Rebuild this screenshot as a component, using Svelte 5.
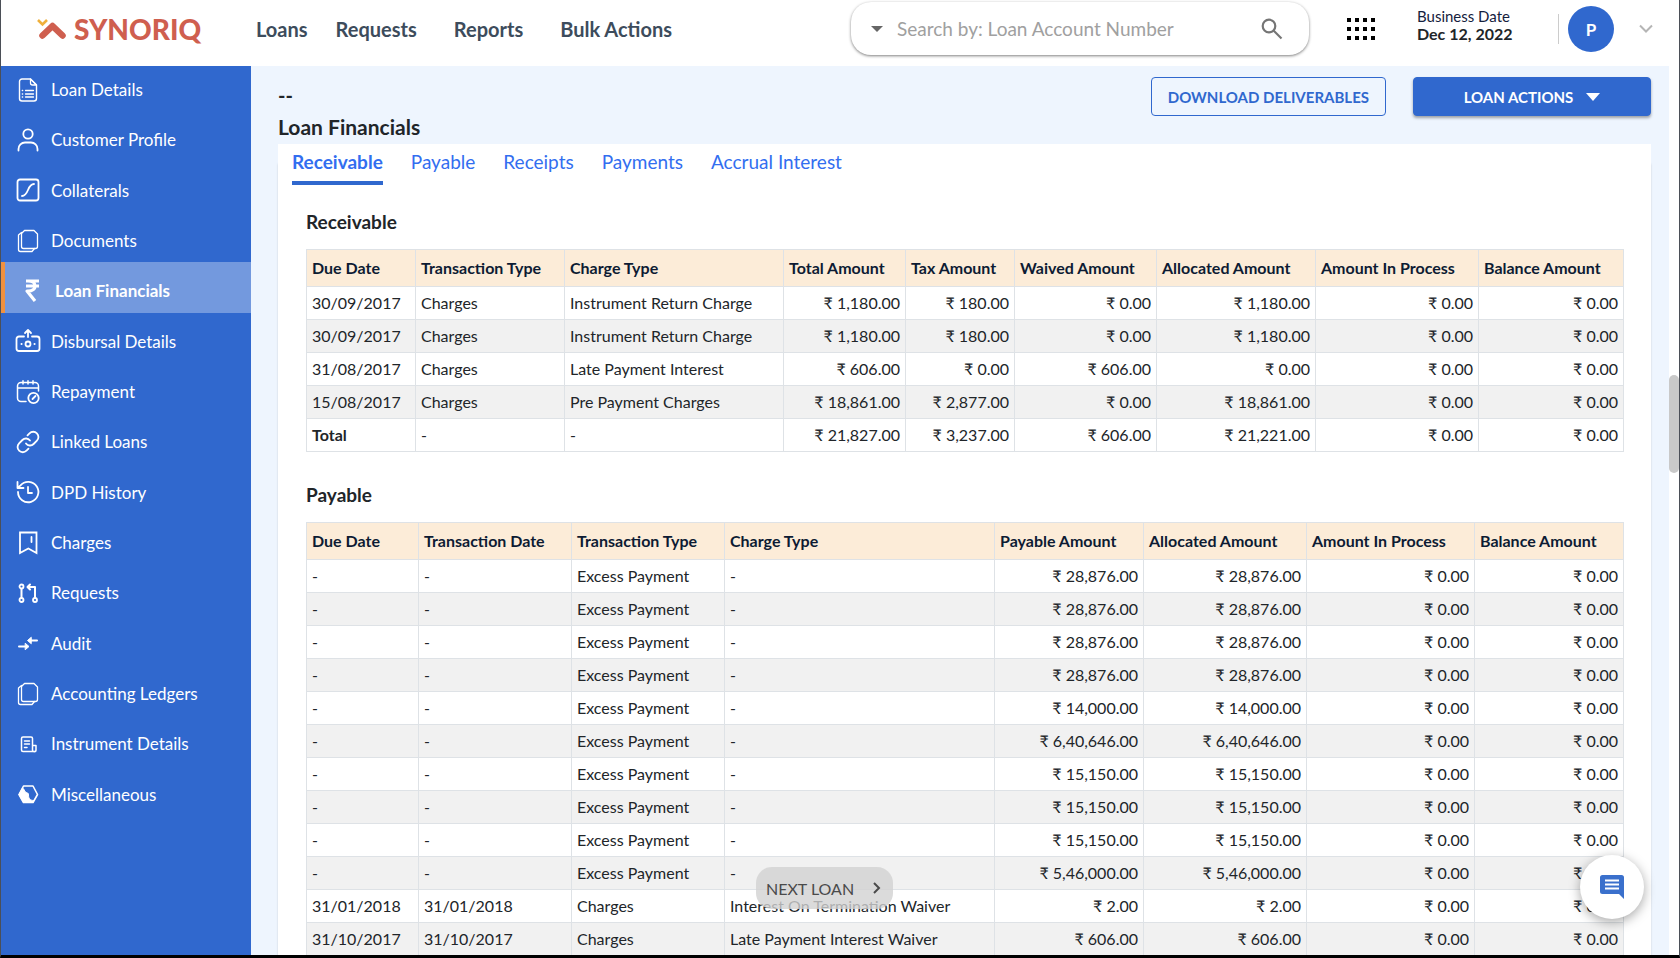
<script lang="ts">
  const topLinks = ['Loans', 'Requests', 'Reports', 'Bulk Actions'];

  const menu = [
    { label: 'Loan Details', icon: 'file' },
    { label: 'Customer Profile', icon: 'user' },
    { label: 'Collaterals', icon: 'curve' },
    { label: 'Documents', icon: 'docs' },
    { label: 'Loan Financials', icon: 'rupee' },
    { label: 'Disbursal Details', icon: 'disburse' },
    { label: 'Repayment', icon: 'calendar' },
    { label: 'Linked Loans', icon: 'link' },
    { label: 'DPD History', icon: 'history' },
    { label: 'Charges', icon: 'bookmark' },
    { label: 'Requests', icon: 'pull' },
    { label: 'Audit', icon: 'arrows' },
    { label: 'Accounting Ledgers', icon: 'docs' },
    { label: 'Instrument Details', icon: 'receipt' },
    { label: 'Miscellaneous', icon: 'hexagon' }
  ];

  const tabs = ['Receivable', 'Payable', 'Receipts', 'Payments', 'Accrual Interest'];

  let activeItem = $state('Loan Financials');
  let activeTab = $state('Receivable');
  let query = $state('');

  const excess = (amount: string) => ['-', '-', 'Excess Payment', '-', amount, amount, '0.00', '0.00'];

  // textCols: number of leading text columns, the rest are amounts
  const tables = [
    {
      title: 'Receivable',
      textCols: 3,
      widths: [109, 149, 219, 122, 109, 142, 159, 163, 145],
      head: ['Due Date', 'Transaction Type', 'Charge Type', 'Total Amount', 'Tax Amount', 'Waived Amount', 'Allocated Amount', 'Amount In Process', 'Balance Amount'],
      rows: [
        ['30/09/2017', 'Charges', 'Instrument Return Charge', '1,180.00', '180.00', '0.00', '1,180.00', '0.00', '0.00'],
        ['30/09/2017', 'Charges', 'Instrument Return Charge', '1,180.00', '180.00', '0.00', '1,180.00', '0.00', '0.00'],
        ['31/08/2017', 'Charges', 'Late Payment Interest', '606.00', '0.00', '606.00', '0.00', '0.00', '0.00'],
        ['15/08/2017', 'Charges', 'Pre Payment Charges', '18,861.00', '2,877.00', '0.00', '18,861.00', '0.00', '0.00'],
        ['Total', '-', '-', '21,827.00', '3,237.00', '606.00', '21,221.00', '0.00', '0.00']
      ]
    },
    {
      title: 'Payable',
      textCols: 4,
      widths: [112, 153, 153, 270, 149, 163, 168, 149],
      head: ['Due Date', 'Transaction Date', 'Transaction Type', 'Charge Type', 'Payable Amount', 'Allocated Amount', 'Amount In Process', 'Balance Amount'],
      rows: [
        excess('28,876.00'),
        excess('28,876.00'),
        excess('28,876.00'),
        excess('28,876.00'),
        excess('14,000.00'),
        excess('6,40,646.00'),
        excess('15,150.00'),
        excess('15,150.00'),
        excess('15,150.00'),
        excess('5,46,000.00'),
        ['31/01/2018', '31/01/2018', 'Charges', 'Interest On Termination Waiver', '2.00', '2.00', '0.00', '0.00'],
        ['31/10/2017', '31/10/2017', 'Charges', 'Late Payment Interest Waiver', '606.00', '606.00', '0.00', '0.00']
      ]
    }
  ];
</script>

{#snippet icon(name: string)}
  <svg class="icon" width="26" height="26" viewBox="0 0 26 26" fill="none" stroke="currentColor" stroke-width="1.8" stroke-linecap="round" stroke-linejoin="round" aria-hidden="true">
    {#if name === 'file'}
      <path d="M15.500 2H7a2.500 2.500 0 0 0-2.500 2.500v17A2.500 2.500 0 0 0 7 24h12a2.500 2.500 0 0 0 2.500-2.500V8z" stroke-width="1.4" />
      <path d="M15.500 2v4a2 2 0 0 0 2 2h4zM10.500 13.500h8M10.500 17h8M10.500 20h8M7.300 13.500h.4M7.300 17h.4M7.300 20h.4" stroke-width="1.3" />
    {:else if name === 'user'}
      <circle cx="13" cy="7" r="4.700" />
      <path d="M3.500 23.500v-1.500a6.500 6.500 0 0 1 6.500-6.500h6a6.500 6.500 0 0 1 6.500 6.500v1.500" />
    {:else if name === 'curve'}
      <rect x="2.500" y="2.500" width="21" height="21" rx="2.500" />
      <path d="M7 19c7 0 5-12 12-12" />
    {:else if name === 'docs'}
      <path d="M9.500 2.500h9.500l3.500 3.500V18.500a2 2 0 0 1-2 2H8.500a2 2 0 0 1-2-2V5.500z" stroke-width="1.300" />
      <path d="M6.500 4.500 3.500 7v14.500a2 2 0 0 0 2 2H17l2.500-3" stroke-width="1.300" />
    {:else if name === 'rupee'}
      <path d="M7 3h13M7 8h13M9 3c9.500 0 9.500 10 0 10H8l8 10" stroke-width="3.200" stroke-linecap="butt" />
    {:else if name === 'disburse'}
      <path d="M9 8.500H4A2.500 2.500 0 0 0 1.500 11v9.500A2.500 2.500 0 0 0 4 23h18a2.500 2.500 0 0 0 2.500-2.500V11A2.500 2.500 0 0 0 22 8.500h-5M13 9V2.500M10 5l3-3 3 3" />
      <circle cx="13" cy="16" r="2.500" />
      <path d="M6.500 16h.1M19.500 16h.1" stroke-width="2" />
    {:else if name === 'calendar'}
      <path d="M11 22.500H6a3.500 3.500 0 0 1-3.500-3.500V7A3.500 3.500 0 0 1 6 3.500h14A3.500 3.500 0 0 1 23.500 7v5M2.500 9h21M8 1.800V5M18 1.800V5M13 1.800V5" stroke-width="1.500" />
      <circle cx="18.500" cy="19" r="5.200" />
      <path d="m17.500 20 3-3" />
    {:else if name === 'link'}
      <path d="M11 14.500a5 5 0 0 0 7.600.5l3.300-3.300a5.200 5.200 0 0 0-7.400-7.400l-2 2" />
      <path d="M15 11.500a5 5 0 0 0-7.600-.5l-3.300 3.300a5.200 5.200 0 0 0 7.400 7.400l2-2" />
    {:else if name === 'history'}
      <path d="M3 13a10.200 10.200 0 1 0 2.500-6.700L2.500 9M2.500 3v6h6M13 8v6h4" />
    {:else if name === 'bookmark'}
      <path d="M5 2.500h16.500v20.500l-8.200-4.500L5 23zM16.500 7v5" stroke-linejoin="miter" />
    {:else if name === 'pull'}
      <circle cx="6.500" cy="6.500" r="2" />
      <circle cx="6.500" cy="20" r="2" />
      <circle cx="20" cy="20" r="2" />
      <path d="M6.500 9v8.500M20 17.500V7h-7M15 4.500 12.500 7l2.500 2.500" stroke-width="2" />
    {:else if name === 'arrows'}
      <path d="M4 16.500h7M22 10.500h-7" stroke-width="2" />
      <path d="m10.500 13.500 3.500 3-3.500 3zM16 7.500l-3.500 3 3.500 3z" fill="currentColor" stroke-width="1" />
    {:else if name === 'receipt'}
      <path d="M17.500 15.500V7.500a1.500 1.500 0 0 0-1.500-1.500H8a1.500 1.500 0 0 0-1.500 1.500V19A1.500 1.500 0 0 0 8 20.500h11.500M17.500 14.500h3.500V19a1.500 1.500 0 0 1-3.500 0zM9.500 10h5M9.500 13h5M9.500 16.500h2.500" stroke-width="1.500" />
    {:else}
      <path d="M8.500 5h9.500l4.500 8.500L18 21.500H8.500L4 13.500z" stroke-width="1.600" />
      <path d="M7.500 7 4 13.500l4.500 8h9.500l1-2c-4 0-5.500-2-5.500-5.500 0-2.500-1.500-2-3-3S9.500 7.500 7.500 7z" fill="currentColor" stroke-width="1" />
    {/if}
  </svg>
{/snippet}

<div class="app">
  <header class="topbar">
    <a class="brand" href="#home">
      <svg width="32" height="22" viewBox="0 0 32 22" fill="none" aria-hidden="true">
        <path d="m2 2 4.500 4.500L11 2" stroke="#efb03c" stroke-width="2.600" />
        <path d="m6.500 17.500 10-9.500 10 9.500" stroke="#cf5f4f" stroke-width="6.500" stroke-linejoin="round" stroke-linecap="round" />
      </svg>
      <span>SYNORIQ</span>
    </a>

    <nav class="top-nav">
      {#each topLinks as link}
        <a href="#{link}">{link}</a>
      {/each}
    </nav>

    <form class="search" role="search">
      <button type="button" class="plain" aria-label="Search field">
        <svg width="12" height="6" viewBox="0 0 12 6" fill="#666"><path d="M0 0h12L6 6z" /></svg>
      </button>
      <input type="text" placeholder="Search by: Loan Account Number" aria-label="Search by: Loan Account Number" bind:value={query} />
      <button type="button" class="plain" aria-label="Search">
        <svg width="22" height="22" viewBox="0 0 22 22" fill="none" stroke="#757575" stroke-width="2.200">
          <circle cx="8" cy="8" r="6.300" />
          <path d="m12.500 12.500 8 8" />
        </svg>
      </button>
    </form>

    <button class="plain apps" aria-label="Apps">
      <svg width="28" height="22" viewBox="0 0 28 22" fill="#000">
        {#each [0, 9, 18] as y}
          {#each [0, 8, 16, 24] as x}
            <rect {x} {y} width="4" height="4" />
          {/each}
        {/each}
      </svg>
    </button>

    <div class="date">
      <span>Business Date</span>
      <strong>Dec 12, 2022</strong>
    </div>

    <div class="account">
      <span class="avatar">P</span>
      <button class="plain" aria-label="Account menu">
        <svg width="14" height="10" viewBox="0 0 14 10" fill="none" stroke="#b5b5b5" stroke-width="2"><path d="m1 1.500 6 6 6-6" /></svg>
      </button>
    </div>
  </header>

  <div class="body">
    <nav class="sidebar">
      <div class="menu">
        {#each menu as item}
          <button class="menu-item" class:active={activeItem === item.label} onclick={() => (activeItem = item.label)}>
            {@render icon(item.icon)}
            <span>{item.label}</span>
          </button>
        {/each}
      </div>
    </nav>

    <main>
      <div class="page-head">
        <div class="titles">
          <span class="loan-id">--</span>
          <h1>Loan Financials</h1>
        </div>
        <button class="btn outline">DOWNLOAD DELIVERABLES</button>
        <button class="btn solid">
          LOAN ACTIONS
          <svg width="14" height="8" viewBox="0 0 14 8" fill="currentColor" aria-hidden="true"><path d="M0 0h14L7 8z" /></svg>
        </button>
      </div>

      <section class="panel">
        <div class="tabs" role="tablist">
          {#each tabs as tab}
            <button role="tab" aria-selected={activeTab === tab} class="tab" class:active={activeTab === tab} onclick={() => (activeTab = tab)}>{tab}</button>
          {/each}
        </div>

        {#each tables as table}
          <h2>{table.title}</h2>
          <table>
            <colgroup>
              {#each table.widths as width}
                <col style="width: {width}px" />
              {/each}
            </colgroup>
            <thead>
              <tr>
                {#each table.head as label}
                  <th scope="col">{label}</th>
                {/each}
              </tr>
            </thead>
            <tbody>
              {#each table.rows as row}
                <tr>
                  {#each row as cell, i}
                    {#if i < table.textCols}
                      <td class:total={cell === 'Total'}>{cell}</td>
                    {:else}
                      <td class="amount">₹ {cell}</td>
                    {/if}
                  {/each}
                </tr>
              {/each}
            </tbody>
          </table>
        {/each}
      </section>
    </main>

    <div class="scrollbar"><div class="thumb"></div></div>
  </div>

  <button class="next-loan">
    NEXT LOAN
    <svg width="8" height="12" viewBox="0 0 8 12" fill="none" stroke="currentColor" stroke-width="2" aria-hidden="true"><path d="m1 1 5 5-5 5" /></svg>
  </button>

  <button class="chat" aria-label="Open chat">
    <svg width="24" height="24" viewBox="0 0 24 24" aria-hidden="true">
      <path d="M2.500 0h19A2.500 2.500 0 0 1 24 2.500V24l-5-5H2.500A2.500 2.500 0 0 1 0 16.500v-14A2.500 2.500 0 0 1 2.500 0z" fill="#3a70cc" />
      <path d="M5 5.500h14M5 9.500h14M5 13.500h14" stroke="#fff" stroke-width="2" />
    </svg>
  </button>
</div>

<style>
  :global(body) {
    margin: 0;
    overflow: hidden;
  }

  .app {
    box-sizing: border-box;
    height: 100vh;
    display: flex;
    flex-direction: column;
    position: relative;
    overflow: hidden;
    background: #fff;
    border: 1px solid #4b4f57;
    border-top: none;
    border-bottom: 3px solid #000;
    font-family: Lato, 'Liberation Sans', sans-serif;
    font-size: 17px;
    color: #212529;
  }

  button,
  input {
    font: inherit;
  }

  button {
    cursor: pointer;
  }

  .plain {
    display: flex;
    padding: 0;
    border: none;
    background: none;
  }

  .topbar {
    height: 66px;
    flex-shrink: 0;
    display: flex;
    align-items: flex-start;
  }

  .brand {
    display: flex;
    align-items: center;
    gap: 6px;
    width: 220px;
    height: 58px;
    padding-left: 35px;
    color: #cf5f4f;
    font-size: 28px;
    font-weight: 900;
    text-decoration: none;
  }

  .top-nav {
    display: flex;
    align-items: center;
    gap: 28px;
    height: 58px;
    color: #3d4c5c;
    font-size: 20px;
    font-weight: 700;
  }

  .top-nav a {
    color: inherit;
    text-decoration: none;
  }

  .top-nav a:nth-child(n + 3) {
    margin-left: 9px;
  }

  .search {
    box-sizing: border-box;
    display: flex;
    align-items: center;
    gap: 14px;
    width: 458px;
    height: 53px;
    margin: 2px 0 0 auto;
    padding: 0 26px 0 20px;
    border-radius: 20px;
    box-shadow: 0 1px 3px rgba(0, 0, 0, 0.5);
  }

  .search input {
    flex: 1;
    min-width: 0;
    padding: 0;
    border: none;
    outline: none;
    background: none;
    font-size: 19px;
  }

  .search input::placeholder {
    color: #a0a0a0;
  }

  .apps {
    margin: 18px 42px 0 38px;
  }

  .date {
    display: flex;
    flex-direction: column;
    width: 141px;
    margin-top: 7px;
    font-size: 15px;
    line-height: 18px;
    color: #14213d;
  }

  .date strong {
    font-size: 16px;
    color: #212529;
  }

  .account {
    display: flex;
    align-items: center;
    gap: 25px;
    height: 46px;
    margin-top: 6px;
    padding-right: 26px;
  }

  .account::before {
    content: '';
    width: 1px;
    height: 30px;
    margin-right: -16px;
    background: #ccc;
  }

  .avatar {
    display: grid;
    place-items: center;
    width: 46px;
    height: 46px;
    border-radius: 50%;
    background: #3068ce;
    color: #fff;
    font-size: 17px;
    font-weight: 700;
  }

  .body {
    flex: 1;
    min-height: 0;
    display: flex;
  }

  .sidebar {
    width: 250px;
    flex-shrink: 0;
    background: #3068ce;
  }

  /* first row tucks under the top bar */
  .menu {
    display: grid;
    grid-auto-rows: 1fr;
    height: 755px;
    margin-top: -5px;
  }

  .menu-item {
    display: flex;
    align-items: center;
    gap: 10px;
    padding: 7px 0 0 14px;
    border: none;
    background: none;
    color: #fff;
    text-align: left;
  }

  .menu-item.active {
    border-left: 4px solid #f0913f;
    background: #7399de;
    font-weight: 700;
  }

  .icon {
    flex-shrink: 0;
  }

  main {
    flex: 1;
    min-width: 0;
    padding: 11px 18px 0 27px;
    background: #eef5fe;
  }

  .page-head {
    display: flex;
    align-items: flex-start;
    gap: 27px;
    height: 67px;
  }

  .titles {
    flex: 1;
    display: flex;
    flex-direction: column;
  }

  .loan-id {
    font-size: 20px;
    font-weight: 700;
    line-height: 37px;
  }

  h1 {
    margin: 0;
    font-size: 21px;
    line-height: 26px;
  }

  .btn {
    box-sizing: border-box;
    display: flex;
    align-items: center;
    justify-content: center;
    gap: 13px;
    height: 39px;
    padding: 0 16px;
    border: 1px solid #3068ce;
    border-radius: 4px;
    font-size: 15px;
    font-weight: 700;
  }

  .outline {
    background: transparent;
    color: #3068ce;
  }

  .solid {
    width: 238px;
    background: #3068ce;
    color: #fff;
    box-shadow: 0 2px 3px rgba(0, 0, 0, 0.35);
  }

  .panel {
    padding: 0 28px;
    background: #fff;
    box-shadow: 0 20px 2px rgba(0, 0, 0, 0.15);
  }

  .tabs {
    display: flex;
    gap: 28px;
    height: 41px;
    margin-left: -14px;
  }

  .tab {
    padding: 0 0 2px;
    border: none;
    border-bottom: 4px solid transparent;
    background: none;
    color: #326ef0;
    font-size: 19px;
  }

  .tab.active {
    border-color: #3068ce;
    font-weight: 700;
  }

  h2 {
    margin: 0;
    padding: 23px 0 13px;
    font-size: 19px;
    line-height: 28px;
  }

  table {
    width: 100%;
    table-layout: fixed;
    border-collapse: collapse;
    margin-bottom: 6px;
    font-size: 16px;
  }

  th,
  td {
    box-sizing: border-box;
    height: 33px;
    padding: 0 5px;
    border: 1px solid #dee2e6;
    line-height: 22px;
    text-align: left;
    white-space: nowrap;
  }

  th {
    height: 37px;
    background: #fcecd8;
    color: #0d1b33;
    font-weight: 700;
  }

  tbody tr:nth-child(even) {
    background: #f1f1f1;
  }

  .amount {
    text-align: right;
  }

  .total {
    font-weight: 700;
  }

  .scrollbar {
    width: 10px;
    flex-shrink: 0;
    background: #fff;
  }

  .thumb {
    height: 98px;
    margin-top: 309px;
    border-radius: 5px;
    background: #c9c9c9;
  }

  .next-loan {
    position: absolute;
    left: 755px;
    bottom: 46px;
    display: flex;
    align-items: center;
    gap: 19px;
    height: 42px;
    padding: 0 12px 0 10px;
    border: none;
    border-radius: 16px;
    background: rgba(210, 210, 210, 0.8);
    color: #4a4a4a;
    font-size: 16px;
  }

  .chat {
    position: absolute;
    right: 35px;
    bottom: 36px;
    display: grid;
    place-items: center;
    width: 64px;
    height: 64px;
    padding: 0;
    border: none;
    border-radius: 50%;
    background: #fff;
    box-shadow: 0 3px 12px rgba(0, 0, 0, 0.35);
  }
</style>
